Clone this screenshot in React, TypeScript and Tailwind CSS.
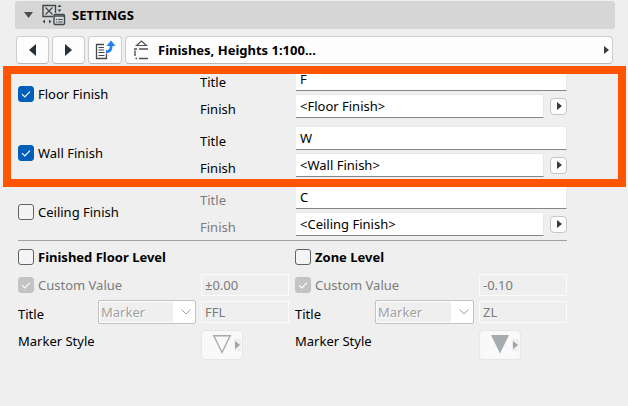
import { ReactNode, useState } from 'react';
import clsx from 'clsx';

type Finish = { id: string; label: string; title: string; finish: string; checked: boolean };
type Level = { id: string; label: string; value: string; title: string; filled: boolean };

const initialFinishes: Finish[] = [
  { id: 'floor', label: 'Floor Finish', title: 'F', finish: '<Floor Finish>', checked: true },
  { id: 'wall', label: 'Wall Finish', title: 'W', finish: '<Wall Finish>', checked: true },
  { id: 'ceiling', label: 'Ceiling Finish', title: 'C', finish: '<Ceiling Finish>', checked: false },
];

const levels: Level[] = [
  { id: 'ffl', label: 'Finished Floor Level', value: '±0.00', title: 'FFL', filled: false },
  { id: 'zl', label: 'Zone Level', value: '-0.10', title: 'ZL', filled: true },
];

const toolButton = 'flex h-7 items-center rounded-[4px] border border-[#cdcdcd] border-b-[#b9b9b9] bg-[#fdfdfd]';
const textField =
  'h-6 min-w-0 flex-1 border-t border-r border-b border-t-[#e8e8e8] border-r-[#e8e8e8] border-b-[#858585] bg-white px-1 text-black outline-none';
const disabledField = 'h-[22px] w-[88px] border border-[#fbfbfb] bg-[#efefef] px-[3px] text-[#7b7b7b]';

function Arrow({ className }: { className?: string }) {
  return (
    <svg width="5" height="8" viewBox="0 0 5 8" className={className} aria-hidden="true">
      <path d="M0 0 L5 4 L0 8 Z" fill="currentColor" />
    </svg>
  );
}

function CheckBox(props: {
  id: string;
  checked: boolean;
  disabled?: boolean;
  bold?: boolean;
  onChange?: (checked: boolean) => void;
  children: ReactNode;
}) {
  const { id, checked, disabled, bold, onChange, children } = props;

  return (
    <div className="flex items-center gap-1">
      <span className="grid h-4 w-4 shrink-0">
        <input
          id={id}
          type="checkbox"
          checked={checked}
          disabled={disabled}
          onChange={(e) => onChange?.(e.target.checked)}
          className="col-start-1 row-start-1 h-4 w-4 appearance-none rounded-[3px] border border-[#626262] bg-[#f4f4f4] checked:border-[#005fb8] checked:bg-[#005fb8] disabled:border-[#c3c3c3] disabled:bg-[#c3c3c3]"
        />
        {checked && (
          <svg viewBox="0 0 16 16" className="pointer-events-none col-start-1 row-start-1 h-4 w-4" aria-hidden="true">
            <path d="M4 8.2 L6.8 11 L12 5.6" fill="none" stroke="white" strokeWidth="1.1" />
          </svg>
        )}
      </span>
      <label htmlFor={id} className={clsx('whitespace-nowrap', bold && 'font-bold', disabled && 'text-[#7b7b7b]')}>
        {children}
      </label>
    </div>
  );
}

function SettingsIcon() {
  return (
    <svg width="24" height="22" viewBox="0 0 24 22" fill="none" stroke="#3d474d" aria-hidden="true">
      <path d="M11 12.5 H1 V1.5 H13.5 V9" strokeWidth="1.4" />
      <path d="M3.5 3.5 L10.5 10.5 M10.5 3.5 L3.5 10.5" strokeWidth="1.2" />
      <path d="M15.5 3 L17.5 0.5 L19.5 3 Z M15.5 5.5 L17.5 8 L19.5 5.5 Z" fill="#3d474d" stroke="none" />
      <path d="M3 15.5 L0.5 17.5 L3 19.5 Z M7 15.5 L9.5 17.5 L7 19.5 Z" fill="#3d474d" stroke="none" />
      <rect x="12" y="10.5" width="10.5" height="10" rx="1.2" strokeWidth="1.4" />
      <path d="M12 12 H22.5" strokeWidth="1.4" />
      <path d="M14 15.5 H15.2 M16.2 15.5 H20.5 M14 18 H15.2 M16.2 18 H20.5" strokeWidth="1.2" />
    </svg>
  );
}

function TransferIcon() {
  return (
    <svg width="21" height="20" viewBox="0 0 21 20" fill="none" aria-hidden="true">
      <path d="M9 4.5 H1.5 V18.5 H11.5 V13.5" stroke="#434a4e" strokeWidth="1.3" />
      <path d="M3.5 7.5 H9 M3.5 10 H9 M3.5 12.5 H9.5 M3.5 15.5 H9.5" stroke="#434a4e" strokeWidth="1.2" />
      <path d="M11 11.6 C15.4 11.6 16.4 9 16.2 4" stroke="#2680ef" strokeWidth="2.8" />
      <path d="M11.5 6 L16 0.5 L20.5 6 Z" fill="#2680ef" />
    </svg>
  );
}

function StampIcon() {
  return (
    <svg width="16" height="20" viewBox="0 0 16 20" fill="none" stroke="#4a5358" aria-hidden="true">
      <path d="M2.5 5.5 L7.5 1 L12.5 5.5 Z" strokeWidth="1.2" />
      <path d="M0 9 H3 M5 9 H14" strokeWidth="1.6" />
      <path d="M1 10.5 V16" strokeWidth="1.4" />
      <path d="M1.5 18.5 H3 M5 18.5 H14" strokeWidth="1.6" />
    </svg>
  );
}

function FinishGroup({ item, onChange }: { item: Finish; onChange: (next: Finish) => void }) {
  const labelClass = clsx('h-6 w-24 shrink-0 pt-[5px]', !item.checked && 'text-[#7b7b7b]');

  return (
    <div className="flex">
      <div className="flex w-[182px] shrink-0 items-center pt-[3px]">
        <CheckBox id={item.id} checked={item.checked} onChange={(checked) => onChange({ ...item, checked })}>
          {item.label}
        </CheckBox>
      </div>
      <div className="flex min-w-0 flex-1 flex-col gap-[3px]">
        <div className="flex items-center">
          <label htmlFor={`${item.id}-title`} className={labelClass}>Title</label>
          <input
            id={`${item.id}-title`}
            value={item.title}
            onChange={(e) => onChange({ ...item, title: e.target.value })}
            className={textField}
          />
        </div>
        <div className="flex items-center">
          <label htmlFor={`${item.id}-finish`} className={labelClass}>Finish</label>
          <input
            id={`${item.id}-finish`}
            value={item.finish}
            onChange={(e) => onChange({ ...item, finish: e.target.value })}
            className={textField}
          />
          <button
            aria-label={`${item.label} options`}
            className="ml-[6px] flex h-[17px] w-[17px] items-center justify-center rounded-[4px] border border-[#c6c6c6] bg-[#fdfdfd] pl-px text-[#3a3a3a]"
          >
            <Arrow />
          </button>
        </div>
      </div>
    </div>
  );
}

function LevelGroup({ item }: { item: Level }) {
  const [enabled, setEnabled] = useState(false);

  return (
    <div className="min-w-0">
      <div className="flex h-5 items-center">
        <CheckBox id={item.id} checked={enabled} bold onChange={setEnabled}>
          {item.label}
        </CheckBox>
      </div>

      <div className="mt-[7px] flex items-center justify-between">
        <CheckBox id={`${item.id}-custom`} checked disabled>
          Custom Value
        </CheckBox>
        <input aria-label={`${item.label} value`} defaultValue={item.value} disabled className={disabledField} />
      </div>

      <div className="mt-1 flex items-center">
        <label htmlFor={`${item.id}-type`} className="w-20 shrink-0 pt-1">Title</label>
        <div className="grid min-w-0 flex-1">
          <select
            id={`${item.id}-type`}
            disabled
            className="col-start-1 row-start-1 h-6 w-full appearance-none rounded-[2px] border border-[#c2c2c2] bg-[linear-gradient(to_left,white_22px,#efefef_22px)] pl-[2px] text-[#a0a0a0] opacity-100 shadow-[inset_0_0_0_1px_white] [text-shadow:1px_1px_0_white]"
          >
            <option>Marker</option>
          </select>
          <svg
            width="10"
            height="6"
            viewBox="0 0 10 6"
            className="pointer-events-none col-start-1 row-start-1 mr-[5px] self-center justify-self-end"
            aria-hidden="true"
          >
            <path d="M0.5 0.5 L5 5 L9.5 0.5" fill="none" stroke="#a0a0a0" />
          </svg>
        </div>
        <input aria-label={`${item.label} title`} defaultValue={item.title} disabled className={clsx(disabledField, 'ml-[5px]')} />
      </div>

      <div className="mt-[6px] flex items-start justify-between">
        <span className="pt-px">Marker Style</span>
        <div className="w-[88px]">
          <button
            disabled
            aria-label={`${item.label} marker style`}
            className="flex h-[30px] w-[42px] items-center justify-end gap-[2px] rounded-[4px] border border-[#e6e6e6] bg-[#f9f9f9] pr-px text-[#a3a3a3]"
          >
            <svg width="20" height="20" viewBox="0 0 20 20" aria-hidden="true">
              {item.filled ? (
                <path d="M1 0 H19 L10 18.5 Z" fill="#a5abae" />
              ) : (
                <path d="M1.8 0.8 H18.2 L10 17.5 Z" fill="none" stroke="#a5abae" strokeWidth="1.4" />
              )}
            </svg>
            <span className="flex h-3 w-[7px] items-center justify-center bg-[#efefef]">
              <Arrow />
            </span>
          </button>
        </div>
      </div>
    </div>
  );
}

export default function App() {
  const [open, setOpen] = useState(true);
  const [finishes, setFinishes] = useState(initialFinishes);

  const updateFinish = (next: Finish) => {
    setFinishes(finishes.map((item) => (item.id === next.id ? next : item)));
  };

  return (
    <div className="min-h-screen bg-[#efefef] pt-px pr-[13px] pl-[15px] font-['Noto_Sans','Open_Sans',sans-serif] text-[13px] leading-5 text-black">
      <button
        onClick={() => setOpen(!open)}
        className="flex h-7 w-full items-center rounded-[3px] bg-[#d6d6d6] pl-[9px] font-bold"
      >
        <svg width="9" height="6" viewBox="0 0 9 6" aria-hidden="true">
          <path d="M0 0 H9 L4.5 6 Z" fill="#4d4d4d" />
        </svg>
        <span className="ml-[9px]">
          <SettingsIcon />
        </span>
        <span className="ml-[6px]">SETTINGS</span>
      </button>

      {open && (
        <>
          <div className="mt-[7px] mr-[2px] ml-px flex gap-[3px]">
            <button aria-label="Previous page" className={clsx(toolButton, 'w-[33px] justify-center text-[#27313a]')}>
              <svg width="7" height="12" viewBox="0 0 7 12" aria-hidden="true">
                <path d="M7 0 L0 6 L7 12 Z" fill="currentColor" />
              </svg>
            </button>
            <button aria-label="Next page" className={clsx(toolButton, 'w-[33px] justify-center text-[#27313a]')}>
              <svg width="7" height="12" viewBox="0 0 7 12" aria-hidden="true">
                <path d="M0 0 L7 6 L0 12 Z" fill="currentColor" />
              </svg>
            </button>
            <button aria-label="Transfer settings" className={clsx(toolButton, 'w-[34px] justify-center')}>
              <TransferIcon />
            </button>
            <button className={clsx(toolButton, 'min-w-0 flex-1 pr-[3px] pl-2 font-bold')}>
              <StampIcon />
              <span className="ml-2 truncate">Finishes, Heights 1:100...</span>
              <Arrow className="ml-auto text-[#3a3a3a]" />
            </button>
          </div>

          <div className="mt-[3px] mr-12 ml-[3px]">
            {/* Finishes */}
            <div className="flex flex-col gap-2 border-b border-[#a0a0a0] pb-1">
              {finishes.map((item) => (
                <FinishGroup key={item.id} item={item} onChange={updateFinish} />
              ))}
            </div>

            {/* Levels */}
            <div className="mt-[6px] grid grid-cols-[271fr_272fr] gap-[6px]">
              {levels.map((item) => (
                <LevelGroup key={item.id} item={item} />
              ))}
            </div>
          </div>
        </>
      )}

      {/* Highlight around the floor and wall finishes */}
      <div className="pointer-events-none absolute top-[66px] right-[2px] left-[3px] h-[121px] border-8 border-[#ff5500]" />
    </div>
  );
}
